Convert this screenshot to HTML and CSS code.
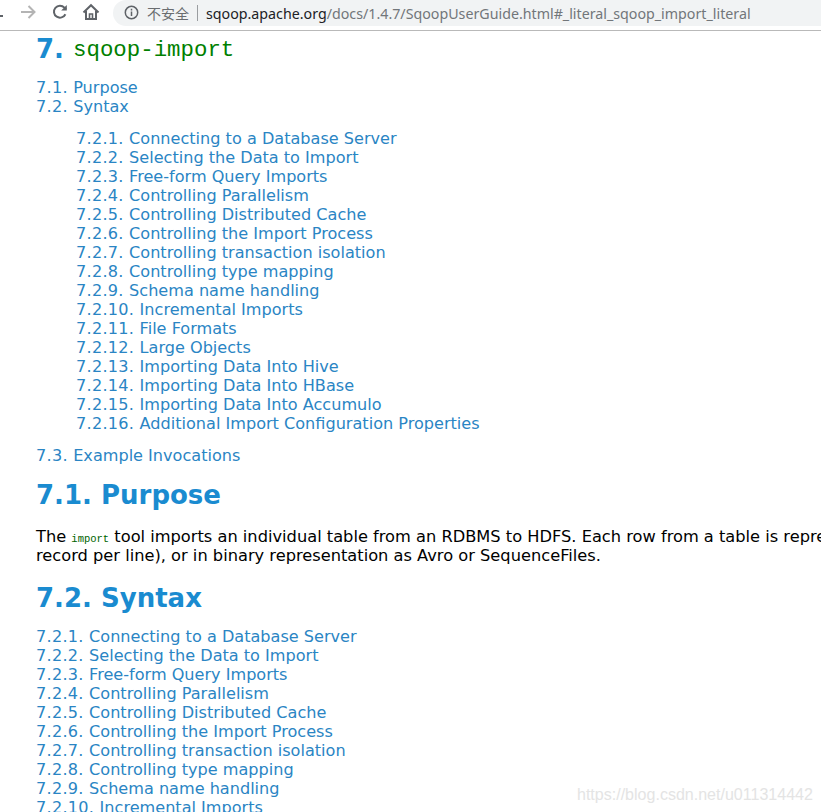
FILE: index.html
```html
<!DOCTYPE html>
<html lang="en">
<head>
<meta charset="utf-8">
<title>sqoop-import</title>
<link rel="stylesheet" href="styles.css">
</head>
<body>
<header class="toolbar">
  <div class="nav">
    <svg class="ico back" width="8" height="16" viewBox="0 0 8 16"><path d="M-8 8H3" /></svg>
    <svg class="ico fwd" width="16" height="16" viewBox="0 0 16 16"><path d="M1 8H14.5M8.5 2l6 6-6 6"/></svg>
    <svg class="ico reload" width="16" height="16" viewBox="0 0 16 16"><path d="M13.4 10.2A6 6 0 1 1 12.4 3.6L14 5.2"/><path class="fill" d="M14.8 1v5.6H9.2z"/></svg>
    <svg class="ico home" width="18" height="18" viewBox="0 0 18 18"><path d="M1.5 9.5L9 2.2l7.5 7.3M4 8v8h10V8"/><path d="M7.5 16v-5h3v5" class="thin"/></svg>
  </div>
  <div class="omnibox">
    <svg class="info" width="15" height="15" viewBox="0 0 15 15"><circle cx="7.5" cy="7.5" r="6.2"/><path d="M7.5 6.5v4.6M7.5 3.8v1.6"/></svg>
    <span class="insecure">不安全</span>
    <span class="sep"></span>
    <span class="url"><b>sqoop.apache.org</b>/docs/1.4.7/SqoopUserGuide.html#_literal_sqoop_import_literal</span>
  </div>
</header>
<main class="page">
  <h2 class="chapter">7. <code>sqoop-import</code></h2>
  <ul class="toc top">
    <li><a href="#"><span class="num">7.1. </span>Purpose</a></li>
    <li><a href="#"><span class="num">7.2. </span>Syntax</a>
      <ul class="toc sub">
        <li><a href="#"><span class="num">7.2.1. </span>Connecting to a Database Server</a></li>
        <li><a href="#"><span class="num">7.2.2. </span>Selecting the Data to Import</a></li>
        <li><a href="#"><span class="num">7.2.3. </span>Free-form Query Imports</a></li>
        <li><a href="#"><span class="num">7.2.4. </span>Controlling Parallelism</a></li>
        <li><a href="#"><span class="num">7.2.5. </span>Controlling Distributed Cache</a></li>
        <li><a href="#"><span class="num">7.2.6. </span>Controlling the Import Process</a></li>
        <li><a href="#"><span class="num">7.2.7. </span>Controlling transaction isolation</a></li>
        <li><a href="#"><span class="num">7.2.8. </span>Controlling type mapping</a></li>
        <li><a href="#"><span class="num">7.2.9. </span>Schema name handling</a></li>
        <li><a href="#"><span class="num">7.2.10. </span>Incremental Imports</a></li>
        <li><a href="#"><span class="num">7.2.11. </span>File Formats</a></li>
        <li><a href="#"><span class="num">7.2.12. </span>Large Objects</a></li>
        <li><a href="#"><span class="num">7.2.13. </span>Importing Data Into Hive</a></li>
        <li><a href="#"><span class="num">7.2.14. </span>Importing Data Into HBase</a></li>
        <li><a href="#"><span class="num">7.2.15. </span>Importing Data Into Accumulo</a></li>
        <li><a href="#"><span class="num">7.2.16. </span>Additional Import Configuration Properties</a></li>
      </ul>
    </li>
    <li><a href="#"><span class="num">7.3. </span>Example Invocations</a></li>
  </ul>
  <h3 class="section first">7.1. Purpose</h3>
  <p class="para">The <code>import</code> tool imports an individual table from an RDBMS to HDFS. Each row from a table is represented as a separate record in HDFS.<br>record per line), or in binary representation as Avro or SequenceFiles.</p>
  <h3 class="section second">7.2. Syntax</h3>
  <ul class="toc">
    <li><a href="#"><span class="num">7.2.1. </span>Connecting to a Database Server</a></li>
    <li><a href="#"><span class="num">7.2.2. </span>Selecting the Data to Import</a></li>
    <li><a href="#"><span class="num">7.2.3. </span>Free-form Query Imports</a></li>
    <li><a href="#"><span class="num">7.2.4. </span>Controlling Parallelism</a></li>
    <li><a href="#"><span class="num">7.2.5. </span>Controlling Distributed Cache</a></li>
    <li><a href="#"><span class="num">7.2.6. </span>Controlling the Import Process</a></li>
    <li><a href="#"><span class="num">7.2.7. </span>Controlling transaction isolation</a></li>
    <li><a href="#"><span class="num">7.2.8. </span>Controlling type mapping</a></li>
    <li><a href="#"><span class="num">7.2.9. </span>Schema name handling</a></li>
    <li><a href="#"><span class="num">7.2.10. </span>Incremental Imports</a></li>
  </ul>
</main>
<div class="watermark">https://blog.csdn.net/u011314442</div>
</body>
</html>
```

FILE: styles.css
```css
html, body { margin: 0; padding: 0; height: 812px; overflow: hidden; background: #fff; }
body { font-family: "DejaVu Sans", Verdana, sans-serif; position: relative; }

.toolbar { display: flex; height: 30px; border-bottom: 1px solid #b9b9b9; box-sizing: content-box; background: #fff; }
.nav { width: 113px; flex: none; position: relative; display: flex; align-items: flex-start; padding-top: 4px; box-sizing: border-box; }
.ico { fill: none; stroke: #5f6368; stroke-width: 2; flex: none; }
.ico .fill { fill: #5f6368; stroke: none; }
.ico .thin { stroke-width: 1.6; }
.back { margin-left: 0; margin-top: 4px; }
.fwd { stroke: #b4b4b4; margin-left: 12px; margin-top: 0; }
.reload { margin-left: 16px; }
.home { margin-left: 14px; margin-top: -1px; }

.omnibox { flex: 1; height: 26px; background: #f1f3f4; border-radius: 13px 0 0 13px; display: flex; align-items: center; padding-left: 11px; font-family: "Open Sans", "Noto Sans CJK SC", sans-serif; font-size: 14px; white-space: nowrap; overflow: hidden; }
.info { fill: none; stroke: #5f6368; stroke-width: 1.5; flex: none; margin-top: -1px; }
.insecure { margin-left: 8px; color: #6a6d70; font-family: "Noto Sans CJK SC", sans-serif; font-size: 14px; }
.sep { width: 1px; height: 16px; background: #9a9da0; margin: 0 8px 0 8px; }
.url { color: #72767a; font-family: "Noto Sans", "Open Sans", sans-serif; font-size: 14.24px; }
.url b { font-weight: 400; color: #202124; }

.page { padding-left: 36px; white-space: nowrap; font-size: 16.24px; line-height: 19px; color: #000; }
.chapter { margin: 0; padding-top: 3px; height: 34px; font-size: 26px; line-height: 30px; font-weight: 700; color: #1a8bd0; }
.chapter code { font-family: "Liberation Mono", "DejaVu Sans Mono", monospace; font-weight: 400; color: #008000; font-size: 22.4px; line-height: 0; vertical-align: 2px; }
.toc { list-style: none; margin: 0; padding: 0; font-size: 16.1px; }
.toc.top { margin-top: 10px; }
.toc.sub { margin: 13px 0 13px 40px; }
.toc a { color: #2a85c4; text-decoration: none; }
.num { letter-spacing: 0.27px; }
.section { margin: 0; font-size: 26px; line-height: 34px; font-weight: 700; color: #1a8bd0; }
.section.first { margin-top: 13px; }
.section.second { margin-top: 16px; }
.para { margin: 15px 0 0; }
.para code { font-family: "Liberation Mono", "DejaVu Sans Mono", monospace; font-size: 10.5px; line-height: 0; color: #006400; }
.section.second + .toc { margin-top: 12px; }

.watermark { position: absolute; left: 577px; top: 784px; font-family: "Liberation Sans", Arial, sans-serif; font-size: 16.05px; line-height: 20px; color: #e4e4e4; white-space: nowrap; }
```
